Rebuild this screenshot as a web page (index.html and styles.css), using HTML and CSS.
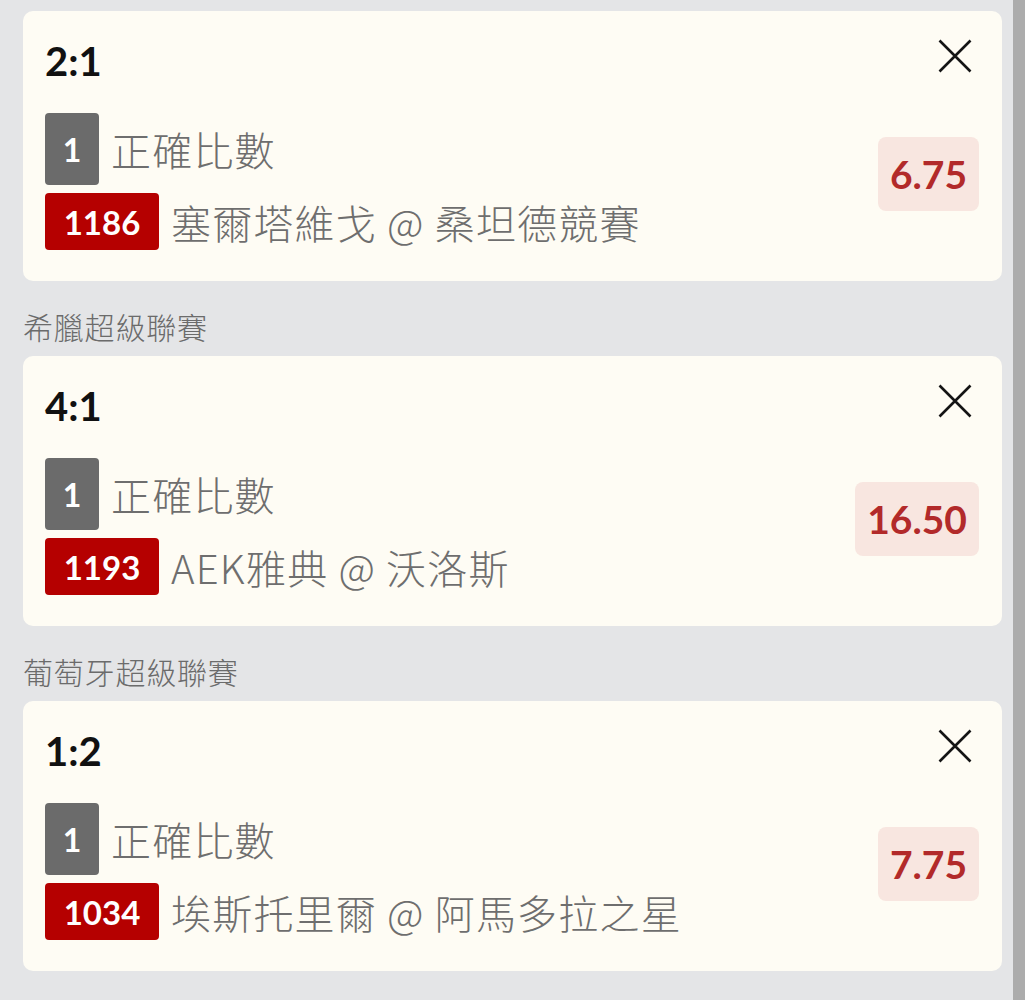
FILE: index.html
```html
<!DOCTYPE html>
<html lang="zh-Hant">
<head>
<meta charset="utf-8">
<title>Bet slip</title>
<link rel="stylesheet" href="styles.css">
</head>
<body>
<div class="page">
  <main class="list">
    <section class="card">
      <div class="head">
        <div class="score">2:1</div>
        <svg class="close" viewBox="0 0 34 34"><path d="M1.5 1.5 L32.5 32.5 M32.5 1.5 L1.5 32.5"/></svg>
      </div>
      <div class="body">
        <div class="lines">
          <div class="line"><span class="leg">1</span><span class="txt">正確比數</span></div>
          <div class="line"><span class="num">1186</span><span class="txt">塞爾塔維戈 @ 桑坦德競賽</span></div>
        </div>
        <div class="odds">6.75</div>
      </div>
    </section>
    <div class="league">希臘超級聯賽</div>
    <section class="card">
      <div class="head">
        <div class="score">4:1</div>
        <svg class="close" viewBox="0 0 34 34"><path d="M1.5 1.5 L32.5 32.5 M32.5 1.5 L1.5 32.5"/></svg>
      </div>
      <div class="body">
        <div class="lines">
          <div class="line"><span class="leg">1</span><span class="txt">正確比數</span></div>
          <div class="line"><span class="num">1193</span><span class="txt">AEK雅典 @ 沃洛斯</span></div>
        </div>
        <div class="odds">16.50</div>
      </div>
    </section>
    <div class="league">葡萄牙超級聯賽</div>
    <section class="card">
      <div class="head">
        <div class="score">1:2</div>
        <svg class="close" viewBox="0 0 34 34"><path d="M1.5 1.5 L32.5 32.5 M32.5 1.5 L1.5 32.5"/></svg>
      </div>
      <div class="body">
        <div class="lines">
          <div class="line"><span class="leg">1</span><span class="txt">正確比數</span></div>
          <div class="line"><span class="num">1034</span><span class="txt">埃斯托里爾 @ 阿馬多拉之星</span></div>
        </div>
        <div class="odds">7.75</div>
      </div>
    </section>
  </main>
  <div class="scrollbar"></div>
</div>
</body>
</html>
```

FILE: styles.css
```css
html, body {
  margin: 0;
  padding: 0;
  height: 1000px;
  overflow: hidden;
}
body {
  background: #e4e5e7;
  font-family: Lato, "Noto Sans CJK TC", sans-serif;
}
.page {
  display: flex;
  height: 1000px;
}
.list {
  flex: 1;
  padding: 11px 11px 0 23px;
}
.scrollbar {
  width: 12px;
  background: #acacac;
}
.card {
  background: #fefcf4;
  border-radius: 10px;
  padding: 27px 23px 31px 22px;
}
.head {
  display: flex;
  justify-content: space-between;
  align-items: flex-start;
  height: 46px;
  margin-bottom: 29px;
}
.score {
  font-weight: 700;
  font-size: 40px;
  line-height: 46px;
  color: #111;
}
.close {
  width: 34px;
  height: 34px;
  margin-top: 1px;
  margin-right: 7px;
  fill: none;
  stroke: #141414;
  stroke-width: 2.6;
}
.body {
  display: flex;
  align-items: center;
  justify-content: space-between;
}
.lines {
  display: flex;
  flex-direction: column;
  gap: 8px;
}
.line {
  display: flex;
  align-items: center;
  gap: 12px;
}
.leg {
  width: 54px;
  height: 72px;
  border-radius: 4px;
  background: #6b6b6b;
  color: #fff;
  font-weight: 700;
  font-size: 32px;
  display: flex;
  align-items: center;
  justify-content: center;
}
.num {
  width: 114px;
  height: 57px;
  border-radius: 4px;
  background: #b50000;
  color: #fff;
  font-weight: 700;
  font-size: 33px;
  display: flex;
  align-items: center;
  justify-content: center;
}
.txt {
  font-family: "Noto Sans CJK TC", sans-serif;
  font-weight: 300;
  font-size: 40px;
  line-height: 50px;
  letter-spacing: 1.2px;
  color: #6e6e6e;
}
.odds {
  height: 74px;
  padding: 0 12px;
  margin-bottom: 15px;
  border-radius: 8px;
  background: #f8e6e0;
  color: #b22a2a;
  font-weight: 700;
  font-size: 39px;
  display: flex;
  align-items: center;
}
.league {
  font-family: "Noto Sans CJK TC", sans-serif;
  font-weight: 300;
  font-size: 30px;
  line-height: 40px;
  letter-spacing: 0.8px;
  color: #6b6b6b;
  margin: 25px 0 10px;
}
```
